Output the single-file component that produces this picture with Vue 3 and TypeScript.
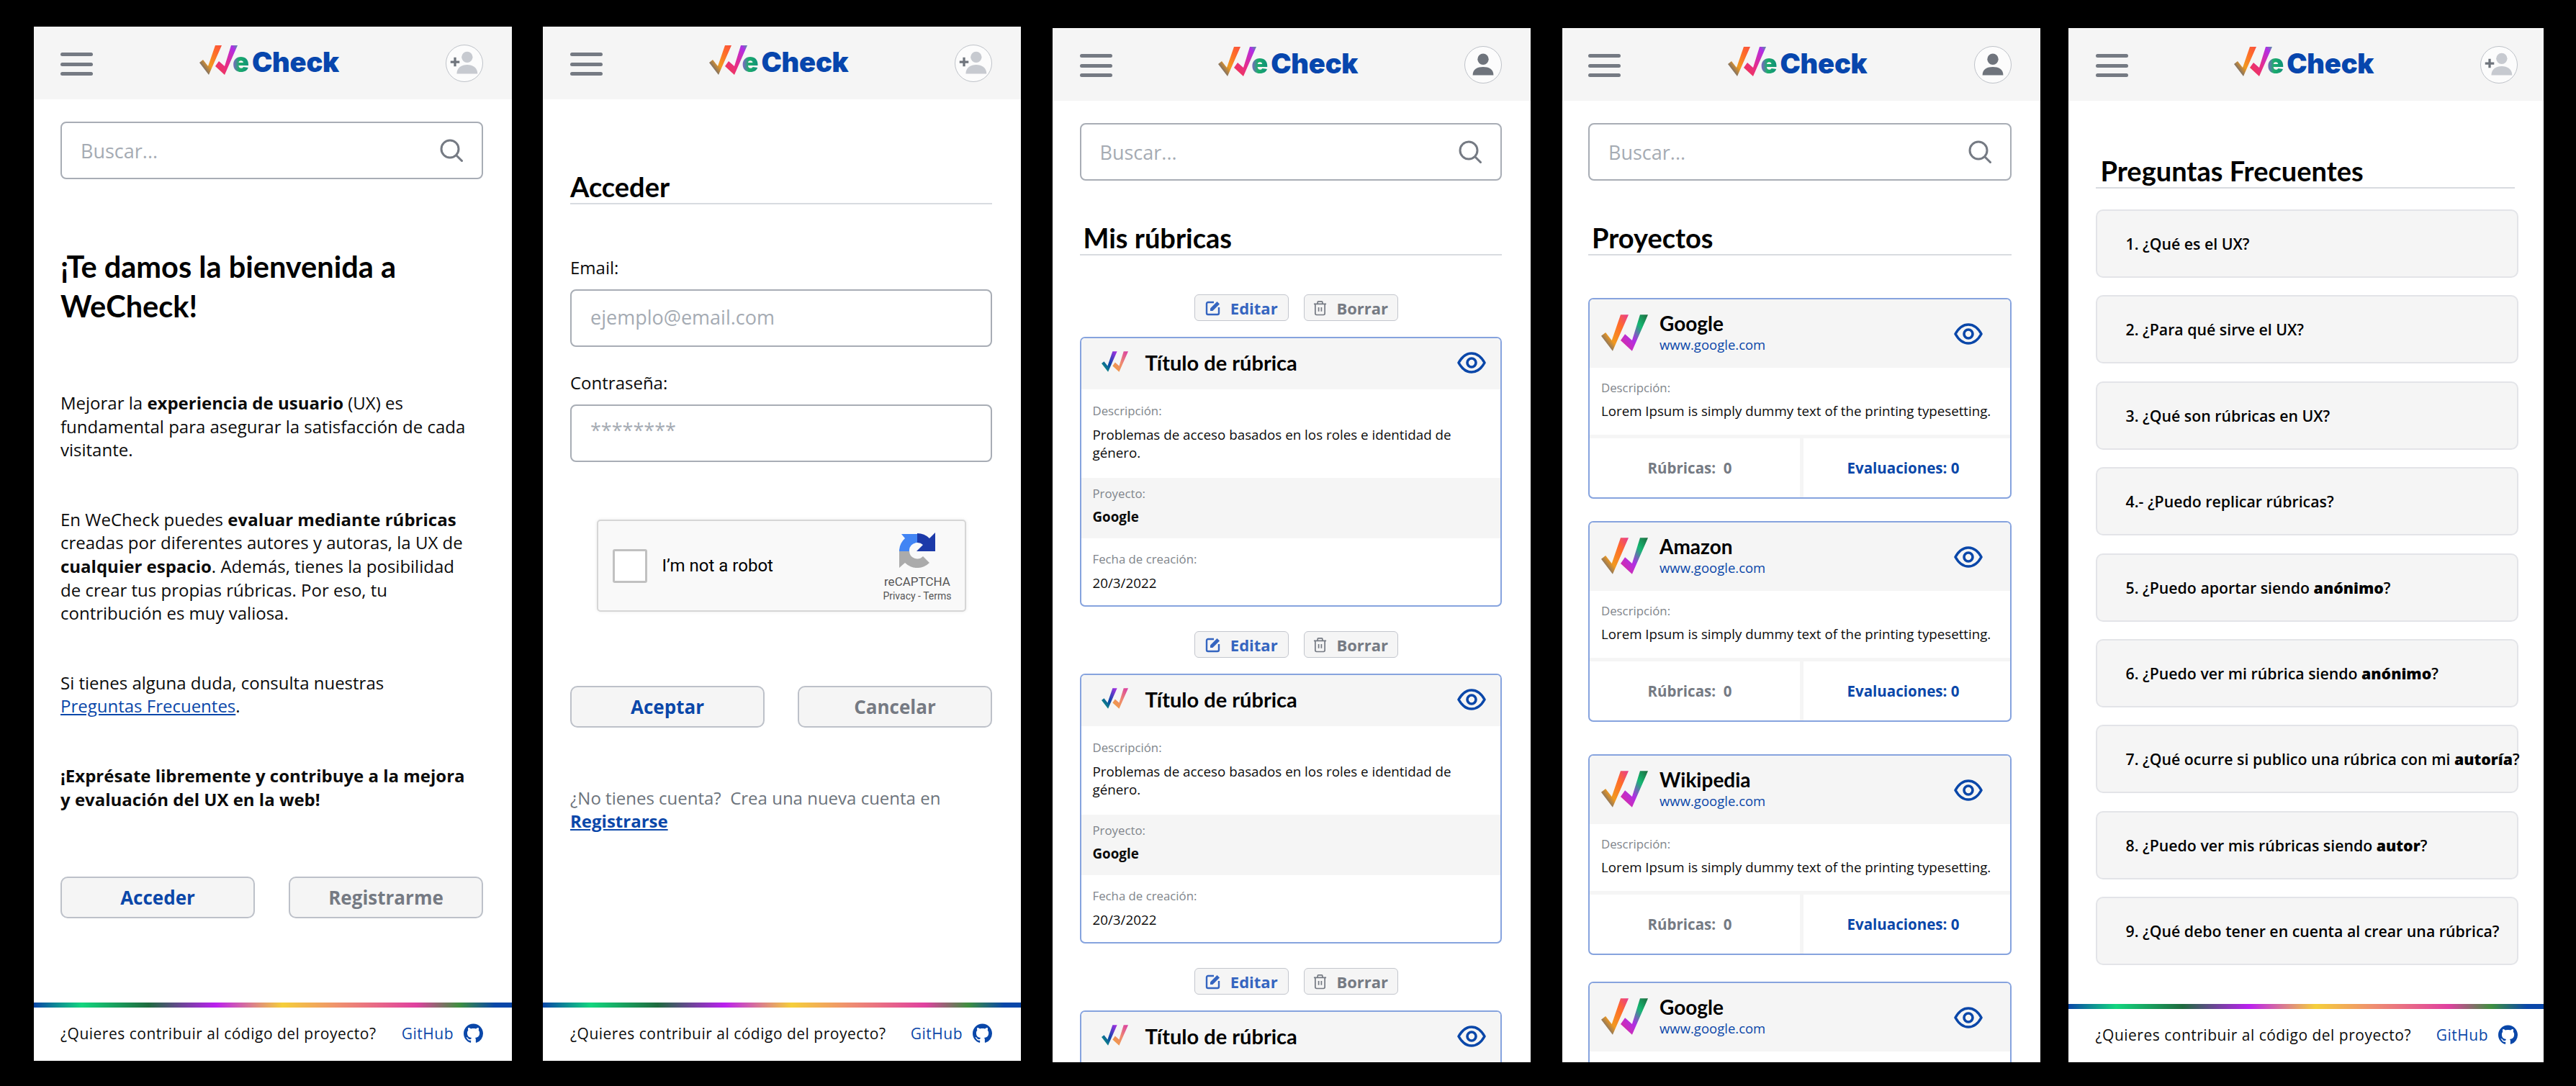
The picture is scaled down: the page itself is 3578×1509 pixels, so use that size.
<script setup lang="ts">
interface Rubric {
  description: string
  project: string
  date: string
}

interface Project {
  name: string
  url: string
  gap: number
}

const rubrics: Rubric[] = [1, 2, 3].map(() => ({
  description: 'Problemas de acceso basados en los roles e identidad de género.',
  project: 'Google',
  date: '20/3/2022',
}))

const projects: Project[] = [
  { name: 'Google', url: 'www.google.com', gap: 59 },
  { name: 'Amazon', url: 'www.google.com', gap: 31 },
  { name: 'Wikipedia', url: 'www.google.com', gap: 45 },
  { name: 'Google', url: 'www.google.com', gap: 37 },
]

const faqs: { text: string; strong?: string; tail?: string }[] = [
  { text: '1. ¿Qué es el UX?' },
  { text: '2. ¿Para qué sirve el UX?' },
  { text: '3. ¿Qué son rúbricas en UX?' },
  { text: '4.- ¿Puedo replicar rúbricas?' },
  { text: '5. ¿Puedo aportar siendo ', strong: 'anónimo', tail: '?' },
  { text: '6. ¿Puedo ver mi rúbrica siendo ', strong: 'anónimo', tail: '?' },
  { text: '7. ¿Qué ocurre si publico una rúbrica con mi ', strong: 'autoría', tail: '?' },
  { text: '8. ¿Puedo ver mis rúbricas siendo ', strong: 'autor', tail: '?' },
  { text: '9. ¿Qué debo tener en cuenta al crear una rúbrica?' },
]
</script>

<template>
  <svg class="defs" aria-hidden="true">
    <defs>
      <linearGradient id="a1" x1="0" y1="1" x2="1" y2="0">
        <stop offset="0" stop-color="#0a47a9" />
        <stop offset=".4" stop-color="#f29a1f" />
        <stop offset=".75" stop-color="#ff6a2a" />
        <stop offset="1" stop-color="#f9503f" />
      </linearGradient>
      <linearGradient id="a2" x1="0" y1="1" x2="1" y2="0">
        <stop offset="0" stop-color="#f33a45" />
        <stop offset=".45" stop-color="#e52c8e" />
        <stop offset=".85" stop-color="#b02ee6" />
        <stop offset="1" stop-color="#4f9aa0" />
      </linearGradient>
      <linearGradient id="b1" x1="0" y1="1" x2="1" y2="0">
        <stop offset="0" stop-color="#12b36c" />
        <stop offset=".45" stop-color="#0a47a9" />
        <stop offset="1" stop-color="#b02ee6" />
      </linearGradient>
      <linearGradient id="b2" x1="0" y1="1" x2="1" y2="0">
        <stop offset="0" stop-color="#f0a03a" />
        <stop offset=".5" stop-color="#ee8a70" />
        <stop offset="1" stop-color="#d83aa8" />
      </linearGradient>
      <linearGradient id="c1" x1="0" y1="1" x2="1" y2="0">
        <stop offset="0" stop-color="#0a47a9" />
        <stop offset=".35" stop-color="#f29a1f" />
        <stop offset=".7" stop-color="#ff6a2a" />
        <stop offset="1" stop-color="#e83c90" />
      </linearGradient>
      <linearGradient id="c2" x1="0" y1="1" x2="1" y2="0">
        <stop offset="0" stop-color="#e52c8e" />
        <stop offset=".4" stop-color="#b02ee6" />
        <stop offset=".7" stop-color="#14b872" />
        <stop offset="1" stop-color="#1f6b3f" />
      </linearGradient>
    </defs>
    <symbol id="mark-a" viewBox="0 0 53 41">
      <path fill="url(#a1)" d="M0 24 5 20l7 9L22 0h9L13 41Z" />
      <path fill="url(#a2)" d="M22 29l5-7 8 7L44 0h9L35 41Z" />
    </symbol>
    <symbol id="mark-b" viewBox="0 0 53 41">
      <path fill="url(#b1)" d="M0 24 5 20l7 9L22 0h9L13 41Z" />
      <path fill="url(#b2)" d="M22 29l5-7 8 7L44 0h9L35 41Z" />
    </symbol>
    <symbol id="mark-c" viewBox="0 0 53 41">
      <path fill="url(#c1)" d="M0 24 5 20l7 9L22 0h9L13 41Z" />
      <path fill="url(#c2)" d="M22 29l5-7 8 7L44 0h9L35 41Z" />
    </symbol>
    <symbol id="search" viewBox="0 0 32 32">
      <circle cx="14" cy="14" r="12" fill="none" stroke="currentColor" stroke-width="3" />
      <path d="M23 23l7.5 7.5" fill="none" stroke="currentColor" stroke-width="3" stroke-linecap="round" />
    </symbol>
    <symbol id="eye" viewBox="0 0 40 30">
      <path
        d="M2 15C7 6 13 2 20 2s13 4 18 13c-5 9-11 13-18 13S7 24 2 15Z"
        fill="none"
        stroke="currentColor"
        stroke-width="3.6"
        stroke-linejoin="round"
      />
      <circle cx="20" cy="15" r="6" fill="none" stroke="currentColor" stroke-width="3.6" />
    </symbol>
    <symbol id="edit" viewBox="0 0 22 22">
      <path
        d="M12 3H4a2 2 0 0 0-2 2v13a2 2 0 0 0 2 2h13a2 2 0 0 0 2-2v-8"
        fill="none"
        stroke="currentColor"
        stroke-width="2.4"
      />
      <path fill="currentColor" d="M7 15v-3.4L16.5 2 20 5.500 10.400 15Z" />
    </symbol>
    <symbol id="trash" viewBox="0 0 20 22">
      <path
        d="M1 5h18M6.500 5V2.500a1 1 0 0 1 1-1h5a1 1 0 0 1 1 1V5M3 5v14a2 2 0 0 0 2 2h10a2 2 0 0 0 2-2V5M8 10v6M12 10v6"
        fill="none"
        stroke="currentColor"
        stroke-width="1.800"
      />
    </symbol>
    <symbol id="github" viewBox="0 0 16 16">
      <path
        fill="currentColor"
        d="M8 0C3.580 0 0 3.580 0 8c0 3.540 2.290 6.530 5.470 7.590.4.07.55-.17.55-.38 0-.19-.01-.82-.01-1.490-2.010.37-2.530-.49-2.690-.94-.09-.23-.48-.94-.82-1.130-.28-.15-.68-.52-.01-.53.63-.01 1.080.58 1.230.82.72 1.210 1.870.87 2.330.66.07-.52.28-.87.51-1.070-1.780-.2-3.640-.89-3.640-3.950 0-.87.31-1.590.82-2.150-.08-.2-.36-1.020.08-2.120 0 0 .67-.21 2.200.82.64-.18 1.320-.27 2-.27.68 0 1.360.09 2 .27 1.530-1.040 2.200-.82 2.200-.82.44 1.100.16 1.920.08 2.120.51.56.82 1.270.82 2.150 0 3.070-1.870 3.750-3.650 3.950.29.25.54.73.54 1.480 0 1.070-.01 1.930-.01 2.200 0 .21.15.46.55.38A8.013 8.013 0 0 0 16 8c0-4.420-3.580-8-8-8Z"
      />
    </symbol>
    <symbol id="user-add" viewBox="0 0 52 52">
      <circle cx="30" cy="17" r="8" fill="#c7cad0" />
      <path fill="#c7cad0" d="M15 41c0-9 7-13 15-13s15 4 15 13Z" />
      <path d="M6 24h13M12.500 17.500v13" fill="none" stroke="#6f747c" stroke-width="3.400" />
    </symbol>
    <symbol id="user" viewBox="0 0 52 52">
      <circle cx="26" cy="18" r="8" fill="#6f747c" />
      <path fill="#6f747c" d="M11 41c0-9 7-12 15-12s15 3 15 12Z" />
    </symbol>
  </svg>

  <div class="screens">
    <!-- inicio -->
    <section class="screen screen-1">
      <header class="top">
        <div class="burger"><i></i><i></i><i></i></div>
        <div class="logo">
          <svg class="logo-mark"><use href="#mark-a" /></svg>
          <span class="logo-e">e</span><span class="logo-check">Check</span>
        </div>
        <div class="avatar"><svg><use href="#user-add" /></svg></div>
      </header>
      <main class="main">
        <div class="search">
          <span>Buscar...</span>
          <svg><use href="#search" /></svg>
        </div>
        <h1 class="welcome">¡Te damos la bienvenida a WeCheck!</h1>
        <p class="intro first">Mejorar la <b>experiencia de usuario</b> (UX) es fundamental para asegurar la satisfacción de cada visitante.</p>
        <p class="intro">En WeCheck puedes <b>evaluar mediante rúbricas</b> creadas por diferentes autores y autoras, la UX de <b>cualquier espacio</b>. Además, tienes la posibilidad de crear tus propias rúbricas. Por eso, tu contribución es muy valiosa.</p>
        <p class="intro">Si tienes alguna duda, consulta nuestras <a class="link">Preguntas Frecuentes</a>.</p>
        <p class="intro"><b>¡Exprésate libremente y contribuye a la mejora y evaluación del UX en la web!</b></p>
        <div class="actions welcome-actions">
          <button class="btn primary">Acceder</button>
          <button class="btn">Registrarme</button>
        </div>
      </main>
      <footer class="foot">
        <div class="rainbow"></div>
        <div class="foot-row">
          <span>¿Quieres contribuir al código del proyecto?</span>
          <a class="gh">GitHub <svg><use href="#github" /></svg></a>
        </div>
      </footer>
    </section>

    <!-- acceso -->
    <section class="screen screen-2">
      <header class="top">
        <div class="burger"><i></i><i></i><i></i></div>
        <div class="logo">
          <svg class="logo-mark"><use href="#mark-a" /></svg>
          <span class="logo-e">e</span><span class="logo-check">Check</span>
        </div>
        <div class="avatar"><svg><use href="#user-add" /></svg></div>
      </header>
      <main class="main">
        <h2 class="title flush login-title">Acceder</h2>
        <label class="form-label email-label">Email:</label>
        <div class="input">ejemplo@email.com</div>
        <label class="form-label pass-label">Contraseña:</label>
        <div class="input stars">********</div>
        <div class="captcha">
          <div class="captcha-box"></div>
          <span class="captcha-text">I’m not a robot</span>
          <div class="captcha-brand">
            <svg viewBox="0 0 50 49">
              <path fill="#1c3aa9" d="M25 1a24 24 0 0 1 17 7l8-8v26H24l9-9a11 11 0 0 0-8-3Z" />
              <path fill="#4285f4" d="M25 1v13a11 11 0 0 0-11 12H0A24 24 0 0 1 8 8L3 2h22Z" />
              <path fill="#ababab" d="M0 26h14a11 11 0 0 0 19 7l9 9a24 24 0 0 1-34 0l-8 7Z" />
            </svg>
            <span class="captcha-name">reCAPTCHA</span>
            <span class="captcha-links">Privacy - Terms</span>
          </div>
        </div>
        <div class="actions login-actions">
          <button class="btn primary">Aceptar</button>
          <button class="btn">Cancelar</button>
        </div>
        <p class="signup">¿No tienes cuenta? &nbsp;Crea una nueva cuenta en <a>Registrarse</a></p>
      </main>
      <footer class="foot">
        <div class="rainbow"></div>
        <div class="foot-row">
          <span>¿Quieres contribuir al código del proyecto?</span>
          <a class="gh">GitHub <svg><use href="#github" /></svg></a>
        </div>
      </footer>
    </section>

    <!-- mis rúbricas -->
    <section class="screen screen-3">
      <header class="top">
        <div class="burger"><i></i><i></i><i></i></div>
        <div class="logo">
          <svg class="logo-mark"><use href="#mark-a" /></svg>
          <span class="logo-e">e</span><span class="logo-check">Check</span>
        </div>
        <div class="avatar"><svg><use href="#user" /></svg></div>
      </header>
      <main class="main">
        <div class="search">
          <span>Buscar...</span>
          <svg><use href="#search" /></svg>
        </div>
        <h2 class="title list-title">Mis rúbricas</h2>
        <div class="rubric" v-for="(r, i) in rubrics" :key="i">
          <div class="tools">
            <button class="tool edit"><svg><use href="#edit" /></svg>Editar</button>
            <button class="tool"><svg class="trash"><use href="#trash" /></svg>Borrar</button>
          </div>
          <article class="card">
            <div class="rubric-head">
              <svg class="mini-mark"><use href="#mark-b" /></svg>
              <h3>Título de rúbrica</h3>
              <svg class="eye"><use href="#eye" /></svg>
            </div>
            <div class="field desc">
              <span class="field-label">Descripción:</span>
              <p>{{ r.description }}</p>
            </div>
            <div class="field proj">
              <span class="field-label">Proyecto:</span>
              <p><b>{{ r.project }}</b></p>
            </div>
            <div class="field date">
              <span class="field-label">Fecha de creación:</span>
              <p>{{ r.date }}</p>
            </div>
          </article>
        </div>
      </main>
    </section>

    <!-- proyectos -->
    <section class="screen screen-4">
      <header class="top">
        <div class="burger"><i></i><i></i><i></i></div>
        <div class="logo">
          <svg class="logo-mark"><use href="#mark-a" /></svg>
          <span class="logo-e">e</span><span class="logo-check">Check</span>
        </div>
        <div class="avatar"><svg><use href="#user" /></svg></div>
      </header>
      <main class="main">
        <div class="search">
          <span>Buscar...</span>
          <svg><use href="#search" /></svg>
        </div>
        <h2 class="title list-title">Proyectos</h2>
        <article
          class="card project"
          v-for="(p, i) in projects"
          :key="i"
          :style="{ marginTop: p.gap + 'px' }"
        >
          <div class="project-head">
            <svg class="project-mark"><use href="#mark-c" /></svg>
            <div class="project-name">
              <h3>{{ p.name }}</h3>
              <a>{{ p.url }}</a>
            </div>
            <svg class="eye"><use href="#eye" /></svg>
          </div>
          <div class="field project-desc">
            <span class="field-label">Descripción:</span>
            <p>Lorem Ipsum is simply dummy text of the printing typesetting.</p>
          </div>
          <div class="stats">
            <span class="stat">Rúbricas:&nbsp; 0</span>
            <span class="stat blue">Evaluaciones: 0</span>
          </div>
        </article>
      </main>
    </section>

    <!-- preguntas -->
    <section class="screen screen-5">
      <header class="top">
        <div class="burger"><i></i><i></i><i></i></div>
        <div class="logo">
          <svg class="logo-mark"><use href="#mark-a" /></svg>
          <span class="logo-e">e</span><span class="logo-check">Check</span>
        </div>
        <div class="avatar"><svg><use href="#user-add" /></svg></div>
      </header>
      <main class="main">
        <h2 class="title faq-title">Preguntas Frecuentes</h2>
        <div class="faq" v-for="(f, i) in faqs" :key="i">
          <span>{{ f.text }}<b v-if="f.strong">{{ f.strong }}</b>{{ f.tail }}</span>
        </div>
      </main>
      <footer class="foot">
        <div class="rainbow"></div>
        <div class="foot-row">
          <span>¿Quieres contribuir al código del proyecto?</span>
          <a class="gh">GitHub <svg><use href="#github" /></svg></a>
        </div>
      </footer>
    </section>
  </div>
</template>

<style>
html,
body {
  margin: 0;
  background: #000;
  overflow: hidden;
}
</style>

<style scoped>
.defs {
  position: absolute;
  width: 0;
  height: 0;
}

.screens {
  display: flex;
  align-items: flex-start;
  width: 3578px;
  height: 1509px;
  padding-left: 47px;
  box-sizing: border-box;
  font-family: "Open Sans", sans-serif;
  color: #0b0b0b;
}

.screen {
  --inset: 38px;
  --inset-right: 40px;
  display: flex;
  flex-direction: column;
  flex: none;
  width: 664px;
  height: 1437px;
  margin-top: 39px;
  background: #fff;
  overflow: hidden;
}

.screen-1 {
  --inset: 37px;
  margin-top: 37px;
}

.screen-2 {
  margin-top: 37px;
  margin-left: 43px;
}

.screen-3 {
  --inset: 37.500px;
  margin-left: 44px;
}

.screen-4 {
  --inset: 36px;
  margin-left: 44px;
}

.screen-5 {
  --inset: 37.500px;
  --inset-right: 36px;
  width: 660px;
  margin-left: 39px;
}

.top {
  display: flex;
  align-items: center;
  justify-content: space-between;
  flex: none;
  box-sizing: border-box;
  height: 101px;
  padding: 0 var(--inset-right) 0 var(--inset);
  background: #f5f5f5;
}

.burger {
  display: flex;
  flex-direction: column;
  gap: 8.500px;
  width: 45px;
  margin-top: 3px;
}

.burger i {
  height: 5px;
  border-radius: 3px;
  background: #757a83;
}

.logo {
  display: flex;
  align-items: flex-end;
  height: 42px;
  margin-bottom: 10px;
  font-family: Inter, sans-serif;
  font-weight: 900;
  font-size: 38px;
  line-height: 36px;
  letter-spacing: -0.2px;
}

.logo-mark {
  width: 53px;
  height: 41px;
  margin-right: -7px;
}

.logo-e {
  background: linear-gradient(90deg, #8a5bd0 0, #1cae6a 40%, #0f8f7a 100%);
  -webkit-background-clip: text;
  background-clip: text;
  color: transparent;
  margin-right: 4px;
}

.logo-check {
  color: #0746ad;
}

.avatar {
  flex: none;
  width: 52px;
  height: 52px;
  box-sizing: border-box;
  border: 1.500px solid #bfc3c9;
  border-radius: 50%;
  background: #fcfcfc;
}

.avatar svg {
  display: block;
  width: 100%;
  height: 100%;
}

.main {
  flex: 1;
  min-height: 0;
  padding: 0 40px 0 var(--inset);
}

.search {
  display: flex;
  align-items: center;
  justify-content: space-between;
  box-sizing: border-box;
  height: 80px;
  margin-top: 31px;
  padding: 0 26px 0 26px;
  border: 2px solid #a8adb5;
  border-radius: 8px;
  font-size: 27px;
  color: #a5abb3;
}

.search svg {
  width: 32px;
  height: 32px;
  color: #757a83;
}

.welcome {
  margin: 94px 60px 0 0;
  font-family: Lato, sans-serif;
  font-weight: 700;
  font-size: 41.500px;
  line-height: 55px;
  color: #000;
}

.intro {
  margin: 64px 12px 0 0;
  font-size: 24px;
  line-height: 32.600px;
}

.intro.first {
  margin-top: 91px;
}

.intro b {
  font-weight: 700;
}

.faq b {
  font-weight: 800;
}

.link {
  display: inline-block;
  color: #0a47a9;
  text-decoration: underline;
}

.actions {
  display: flex;
  justify-content: space-between;
}

.welcome-actions {
  margin-top: 90.500px;
}

.login-actions {
  margin-top: 103px;
}

.btn {
  box-sizing: border-box;
  width: 270px;
  height: 58px;
  padding: 0;
  border: 2px solid #bdc1c9;
  border-radius: 10px;
  background: #f5f5f5;
  font-family: "Open Sans", sans-serif;
  font-weight: 700;
  font-size: 26px;
  color: #757a83;
}

.btn.primary {
  color: #0a47a9;
}

.foot {
  flex: none;
}

.rainbow {
  height: 7px;
  background: linear-gradient(
    90deg,
    #0a47a9 0,
    #13d67f 10%,
    #1f6b3f 24%,
    #bb1ff0 38%,
    #f5cf3a 52%,
    #ef8f70 64%,
    #e040a0 80%,
    #3f9040 89%,
    #0a47a9 96.500%,
    #0a47a9 100%
  );
}

.foot-row {
  display: flex;
  align-items: center;
  justify-content: space-between;
  box-sizing: border-box;
  height: 74px;
  padding: 0 var(--inset-right) 3px var(--inset);
  font-size: 21px;
  letter-spacing: 0.500px;
}

.gh {
  display: flex;
  align-items: center;
  gap: 14px;
  color: #0a47a9;
}

.gh svg {
  width: 27px;
  height: 28px;
}

.title {
  margin: 0;
  padding: 0 0 2px 5px;
  border-bottom: 2px solid #d8dbe0;
  font-family: Lato, sans-serif;
  font-weight: 700;
  font-size: 38px;
  line-height: 42px;
  color: #000;
}

.title.flush {
  padding-left: 0;
}

.login-title {
  margin-top: 100px;
}

.list-title {
  margin-top: 58px;
}

.faq-title {
  margin-top: 76px;
  padding-left: 7px;
}

.form-label {
  display: block;
  font-size: 24px;
  line-height: 32px;
}

.email-label {
  margin-top: 72px;
}

.pass-label {
  margin-top: 34px;
}

.input {
  box-sizing: border-box;
  height: 80px;
  margin-top: 14px;
  padding: 0 26px;
  border: 2px solid #a8adb5;
  border-radius: 8px;
  font-size: 27px;
  line-height: 74px;
  color: #a5abb3;
}

.input.stars {
  line-height: 68px;
}

.captcha {
  display: flex;
  align-items: center;
  box-sizing: border-box;
  width: 513px;
  height: 128px;
  margin: 80px auto 0;
  padding: 0 18px 0 20px;
  border: 2px solid #d6d6d6;
  border-radius: 5px;
  background: #f9f9f9;
  box-shadow: 0 0 5px rgba(0, 0, 0, 0.08);
  font-family: Roboto, sans-serif;
}

.captcha-box {
  flex: none;
  width: 48px;
  height: 47px;
  box-sizing: border-box;
  border: 3.500px solid #c1c1c1;
  border-radius: 3px;
  background: #fff;
}

.captcha-text {
  margin-left: 21px;
  font-size: 24px;
  color: #000;
}

.captcha-brand {
  display: flex;
  flex-direction: column;
  align-items: center;
  margin-left: auto;
  margin-top: 6px;
  color: #555;
}

.captcha-brand svg {
  width: 50px;
  height: 49px;
}

.captcha-name {
  margin-top: 9px;
  font-size: 17px;
  line-height: 20px;
}

.captcha-links {
  font-size: 14px;
  line-height: 20px;
}

.signup {
  margin: 82px 0 0;
  font-size: 24px;
  line-height: 32px;
  color: #6c737b;
}

.signup a {
  font-weight: 700;
  color: #0a47a9;
  text-decoration: underline;
}

.tools {
  display: flex;
  justify-content: center;
  gap: 21px;
  margin: 54px 0 22px;
  padding-left: 15px;
}

.rubric + .rubric .tools {
  margin-top: 34.500px;
}

.tool {
  display: flex;
  align-items: center;
  justify-content: center;
  gap: 13px;
  box-sizing: border-box;
  width: 131px;
  height: 37px;
  padding: 0;
  border: 1.500px solid #c3c6cd;
  border-radius: 6px;
  background: #f5f5f5;
  font-family: "Open Sans", sans-serif;
  font-weight: 700;
  font-size: 22px;
  color: #757a83;
}

.tool.edit {
  color: #3565c0;
}

.tool svg {
  width: 22px;
  height: 22px;
}

.tool svg.trash {
  width: 19px;
}

.card {
  box-sizing: border-box;
  border: 2px solid #86a3de;
  border-radius: 7px;
  overflow: hidden;
}

.rubric-head {
  display: flex;
  align-items: center;
  box-sizing: border-box;
  height: 71px;
  padding: 0 20px 4px 28px;
  background: #f5f5f5;
}

.mini-mark {
  width: 37px;
  height: 29px;
  margin-top: -3px;
}

.rubric-head h3,
.project-name h3 {
  margin: 0;
  font-family: Lato, sans-serif;
  font-weight: 700;
  font-size: 29px;
  color: #000;
}

.rubric-head h3 {
  margin-left: 24px;
}

.eye {
  width: 40px;
  height: 30px;
  margin-left: auto;
  color: #0a47a9;
}

.field {
  padding: 18px 17px 20px 16px;
}

.field p {
  margin: 8.500px 0 0;
  font-size: 18.800px;
  line-height: 25.600px;
}

.field-label {
  display: block;
  font-size: 16.800px;
  line-height: 24px;
  color: #80858b;
}

.field.desc {
  height: 122.500px;
  box-sizing: border-box;
}

.field.proj {
  height: 84px;
  box-sizing: border-box;
  padding-top: 10px;
  background: #f5f5f5;
}

.field.date {
  height: 93px;
  box-sizing: border-box;
  padding-top: 17.500px;
}

.project {
  height: 279px;
}

.project-head {
  display: flex;
  align-items: center;
  box-sizing: border-box;
  height: 95px;
  padding: 0 38px 0 16px;
  background: #f5f5f5;
}

.project-mark {
  width: 65px;
  height: 51px;
  margin-top: -2px;
}

.project-name {
  display: flex;
  flex-direction: column;
  margin-left: 16px;
  margin-top: -5px;
}

.project-name h3 {
  font-size: 28px;
  line-height: 36px;
}

.project-name a {
  font-size: 18.500px;
  line-height: 24px;
  color: #0a47a9;
}

.field.project-desc {
  box-sizing: border-box;
  padding-top: 16px;
  padding-left: 16px;
  padding-right: 0;
  border-bottom: 5px solid #f5f5f5;
  height: 98px;
}

.field.project-desc p {
  margin-top: 7px;
  font-size: 18.700px;
}

.stats {
  display: grid;
  grid-template-columns: 292px 1fr;
  height: 82px;
}

.stat {
  display: flex;
  align-items: center;
  justify-content: center;
  padding-right: 14px;
  font-weight: 700;
  font-size: 20.500px;
  color: #757a83;
}

.stat.blue {
  padding-right: 10px;
  border-left: 5px solid #f5f5f5;
  color: #0a47a9;
}

.faq {
  display: flex;
  align-items: center;
  box-sizing: border-box;
  width: 587px;
  height: 95px;
  margin-top: 24.400px;
  padding-left: 40px;
  border: 2px solid #e3e4e8;
  border-radius: 10px;
  background: #f5f5f5;
  font-weight: 600;
  font-size: 21.300px;
  color: #000;
  white-space: nowrap;
}

.faq-title + .faq {
  margin-top: 29px;
}
</style>
